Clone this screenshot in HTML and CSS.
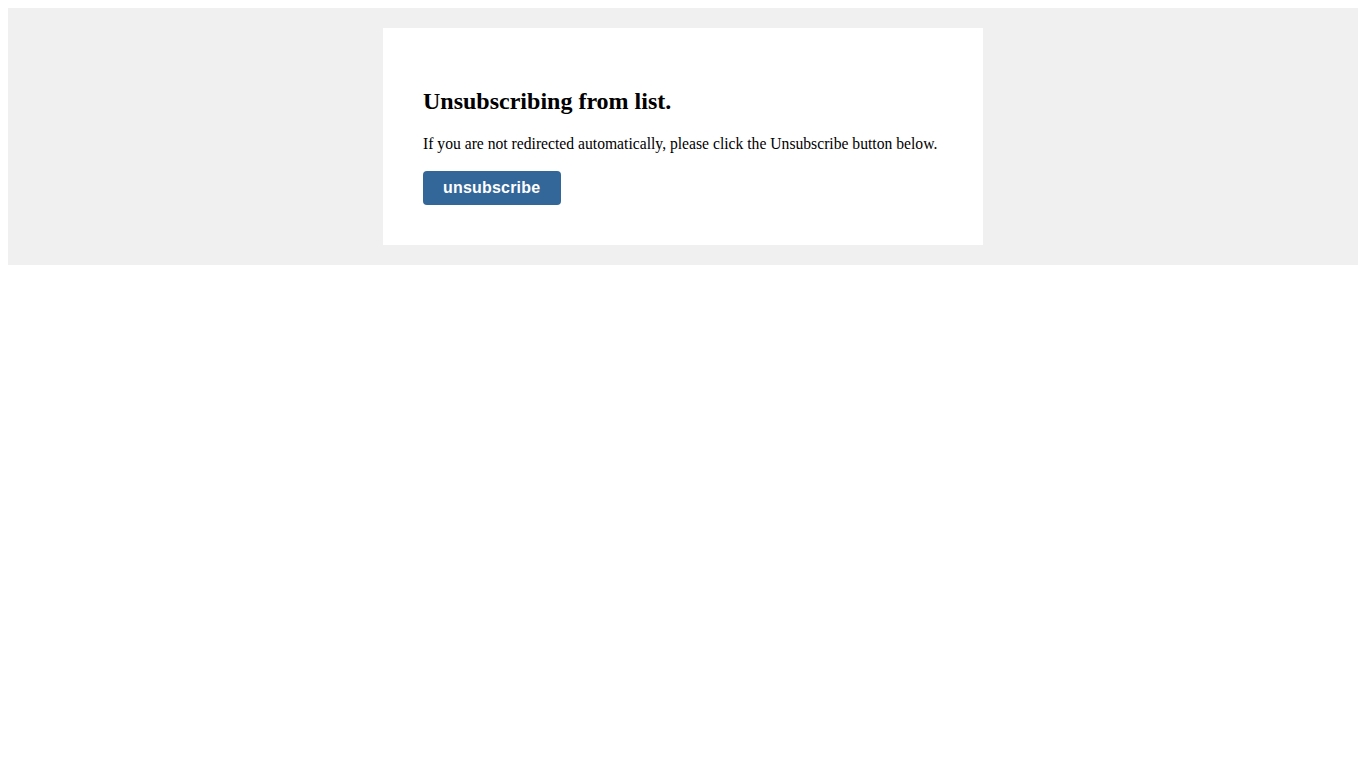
FILE: index.html
```html
<!DOCTYPE html>
<html lang="en">
<head>
<meta charset="utf-8">
<title>Unsubscribe</title>
<link rel="stylesheet" href="styles.css">
</head>
<body>
<div class="wrap">
  <div class="card">
    <h2 class="title">Unsubscribing from list.</h2>
    <p class="text">If you are not redirected automatically, please click the Unsubscribe button below.</p>
    <button class="btn" type="button">unsubscribe</button>
  </div>
</div>
</body>
</html>
```

FILE: styles.css
```css
body {
  margin: 8px;
  font-family: "Liberation Serif", "Times New Roman", serif;
  color: #000;
  background: #fff;
}
.wrap {
  background: #f0f0f0;
  padding: 20px;
  display: flex;
  justify-content: center;
}
.card {
  background: #fff;
  width: 520px;
  padding: 40px;
}
.title {
  font-size: 24px;
  font-weight: bold;
  margin: 19.92px 0;
}
.text {
  font-size: 15.65px;
  line-height: 18.4px;
  margin: 16px 0 18px;
  white-space: nowrap;
}
.btn {
  display: block;
  background: #336699;
  color: #fff;
  border: 0;
  border-radius: 4px;
  font-family: "Liberation Sans", Arial, sans-serif;
  font-weight: bold;
  font-size: 16px;
  line-height: 18px;
  letter-spacing: 0.2px;
  padding: 8px 21px 8px 20px;
  cursor: pointer;
}
```
